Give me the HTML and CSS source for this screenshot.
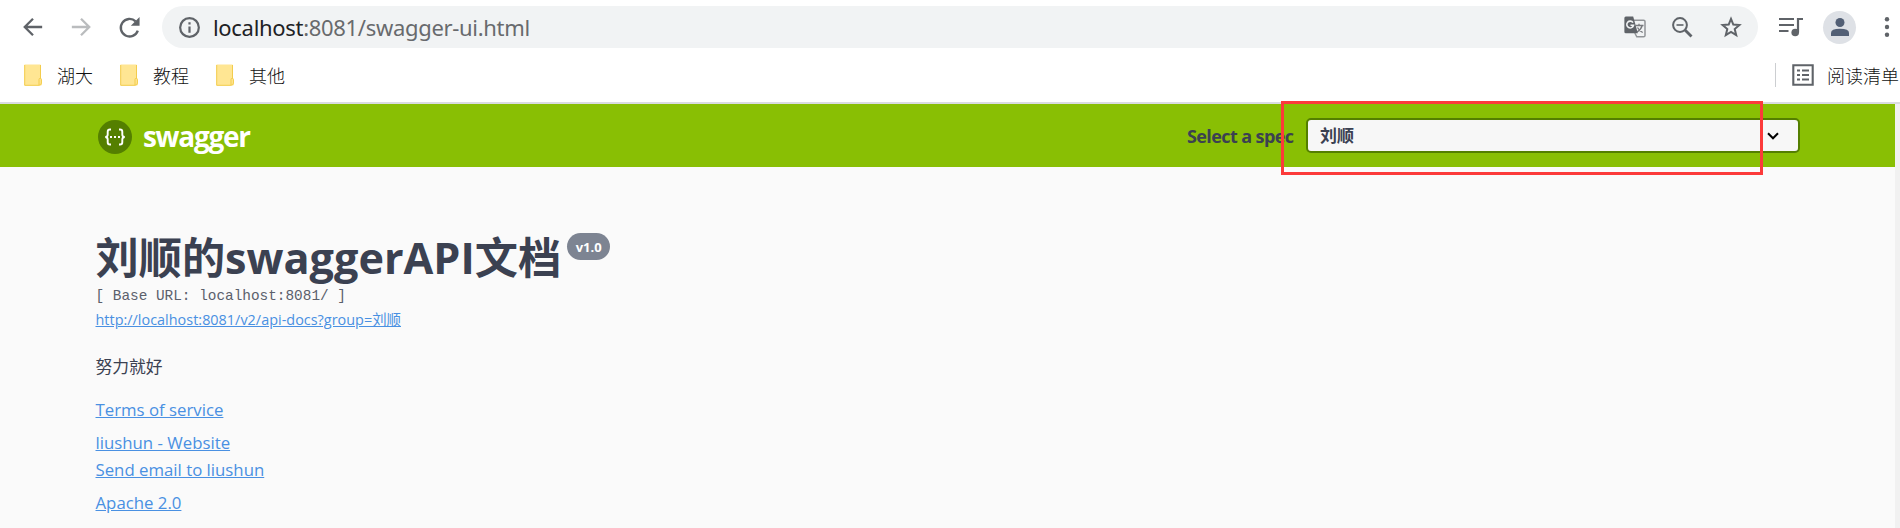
FILE: index.html
```html
<!DOCTYPE html>
<html lang="zh-CN">
<head>
<meta charset="utf-8">
<title>Swagger UI</title>
<link rel="stylesheet" href="styles.css">
</head>
<body>
<header class="browser">
  <div class="toolbar">
    <svg class="nav back" viewBox="0 0 24 24"><path d="M22 12H3M12 3L3 12l9 9"/></svg>
    <svg class="nav forward" viewBox="0 0 24 24"><path d="M2 12h19M12 3l9 9-9 9"/></svg>
    <svg class="nav reload" viewBox="0 0 24 24"><path d="M21.500 15.500A10 10 0 1 1 19 5"/><path class="solid" d="M23.500 0v10h-10z"/></svg>
    <div class="address">
      <svg class="info" viewBox="0 0 20 20"><circle cx="10" cy="10" r="8.9"/><path d="M10 9v6M10 5v2.2"/></svg>
      <span class="url"><b class="host">localhost</b>:8081/swagger-ui.html</span>
      <svg class="translate" viewBox="0 0 22 22"><path class="page" d="M10 4.2h9.6q1.4 0 1.4 1.4v13.8q0 1.4-1.4 1.4h-6.8l-2-3.8"/><path class="glyph" d="M11.5 9.5h8M15 7.7v1.8M18.2 9.5q-1 4-5.2 6.500M13.500 11.500q1.500 3 5.200 5"/><path class="cover" d="M1.800.5h7.400l4.600 16.800h-12Q.4 17.300.4 15.900V2Q.4.5 1.800.5z"/><path class="g" d="M9 6.600A3.400 3.400 0 1 0 9.500 9.300H6.500"/></svg>
      <svg class="magnify" viewBox="0 0 21 21"><circle cx="8" cy="8" r="6.900"/><path class="handle" d="M13 13l6.500 6.500"/><path class="minus" d="M4.500 8h7"/></svg>
      <svg class="star" viewBox="0 0 24 24"><path d="M12 3.800l2.300 5.700 6.100.5-4.700 4 1.500 6-5.200-3.200-5.200 3.200 1.500-6-4.700-4 6.100-.5z"/></svg>
    </div>
    <svg class="media" viewBox="0 0 25 20"><path d="M0 2h15M0 8h15M0 14h9.500"/><path d="M19 15.500V2h5"/><circle cx="16.200" cy="15.500" r="3.800"/></svg>
    <div class="avatar"><svg viewBox="0 0 18 18"><circle cx="9" cy="4.500" r="4.500"/><path d="M0 18v-3q0-4.200 9-4.200T18 15v3z"/></svg></div>
    <svg class="more" viewBox="0 0 6 20"><circle cx="3" cy="2.300" r="2.200"/><circle cx="3" cy="10" r="2.200"/><circle cx="3" cy="17.700" r="2.200"/></svg>
  </div>
  <nav class="bookmarks">
    <div class="bookmark"><svg class="folder" viewBox="0 0 18 22"><path d="M.5.5h15.500q1 0 1 1V14.500q1 .5 1 1.500v4q0 1.500-1.500 1.500H.5z"/><path class="fold" d="M16.500 1v13.500M.700 1v20.300h14.300M15 21V15.500q0-1.200 1.200-1.200t1.200 1.200v3.500q0 2-2.400 2.300"/></svg><span>湖大</span></div>
    <div class="bookmark"><svg class="folder" viewBox="0 0 18 22"><path d="M.5.5h15.500q1 0 1 1V14.500q1 .5 1 1.500v4q0 1.500-1.500 1.500H.5z"/><path class="fold" d="M16.500 1v13.500M.700 1v20.300h14.300M15 21V15.500q0-1.200 1.200-1.200t1.200 1.200v3.500q0 2-2.400 2.300"/></svg><span>教程</span></div>
    <div class="bookmark"><svg class="folder" viewBox="0 0 18 22"><path d="M.5.5h15.500q1 0 1 1V14.500q1 .5 1 1.500v4q0 1.500-1.500 1.500H.5z"/><path class="fold" d="M16.500 1v13.500M.700 1v20.300h14.300M15 21V15.500q0-1.200 1.200-1.200t1.200 1.200v3.500q0 2-2.400 2.300"/></svg><span>其他</span></div>
    <div class="reading">
      <svg viewBox="0 0 22 22"><path d="M1.300 1.300h19.400v19.400H1.300zM5 6.500h3M10 6.500h7M5 11h3M10 11h7M5 15.500h3M10 15.500h7"/></svg>
      <span>阅读清单</span>
    </div>
  </nav>
</header>
<div class="viewport">
  <main class="page-body">
    <div class="topbar">
      <svg class="logo" viewBox="0 0 34 34"><circle cx="17" cy="17" r="17"/><path d="M13 9.500h-1q-2.300 0-2.300 2.300v2.700q0 2.500-2.500 2.500 2.500 0 2.500 2.500v2.700q0 2.300 2.300 2.300h1M21 9.500h1q2.300 0 2.300 2.300v2.700q0 2.500 2.500 2.500-2.500 0-2.500 2.500v2.700q0 2.300-2.300 2.300h-1"/><path class="dots" d="M12 17h2M16 17h2M20 17h2"/></svg>
      <span class="brand">swagger</span>
      <span class="spec-label">Select a spec</span>
      <div class="spec-select"><span>刘顺</span><svg viewBox="0 0 12 8"><path d="M1 1.300l5 5 5-5"/></svg></div>
      <div class="marker"></div>
    </div>
    <section class="info-block">
      <div class="heading"><h1 class="title">刘顺的swaggerAPI文档</h1><span class="version">v1.0</span></div>
      <pre class="base-url">[ Base URL: localhost:8081/ ]</pre>
      <a class="docs-link">http://localhost:8081/v2/api-docs?group=刘顺</a>
      <p class="description">努力就好</p>
      <div class="links">
        <a class="terms">Terms of service</a>
        <a>liushun - Website</a>
        <a>Send email to liushun</a>
        <a class="license">Apache 2.0</a>
      </div>
    </section>
  </main>
  <div class="scrollbar"></div>
</div>
</body>
</html>
```
FILE: styles.css
```css
* { box-sizing: border-box; }
body { margin: 0; width: 1900px; height: 528px; overflow: hidden; background: #fff; font-family: "Open Sans", "Noto Sans CJK SC", sans-serif; }
svg { display: block; flex: none; fill: none; }

.browser { height: 104px; border-bottom: 2px solid #dadce0; }
.toolbar { display: flex; align-items: center; height: 54px; padding-left: 22px; }
.nav { width: 22px; height: 22px; stroke: #5f6368; stroke-width: 2.500; }
.forward { margin-left: 26px; stroke: #babcbe; }
.reload { margin-left: 27px; width: 21px; height: 21px; margin-right: 2px; overflow: visible; stroke-width: 2.700; }
.reload .solid { fill: #5f6368; stroke: none; }
.address { display: flex; align-items: center; width: 1596px; height: 42px; margin-left: 20px; padding-left: 17px; border-radius: 21px; background: #f1f3f4; }
.info { width: 21px; height: 21px; stroke: #5f6368; stroke-width: 2.100; }
.url { width: 1411px; margin-left: 13px; padding-bottom: 1px; font: 22px/40px "Noto Sans", sans-serif; letter-spacing: -.31px; color: #686a6d; white-space: nowrap; }
.host { font-weight: 400; color: #202124; }
.translate { width: 22px; height: 22px; }
.translate .page { stroke: #919497; stroke-width: 1.500; }
.translate .glyph { stroke: #77797d; stroke-width: 1.300; }
.translate .cover { fill: #5f6368; }
.translate .g { stroke: #f1f3f4; stroke-width: 1.600; }
.magnify { width: 21px; height: 21px; margin-left: 26px; stroke: #5f6368; stroke-width: 2; }
.magnify .handle { stroke-width: 2.800; }
.magnify .minus { stroke-width: 1.600; }
.star { width: 24px; height: 24px; margin-left: 26px; stroke: #5f6368; stroke-width: 2; }
.media { width: 25px; height: 20px; margin-left: 21px; stroke: #5f6368; stroke-width: 2.200; }
.media circle { fill: #5f6368; stroke: none; }
.avatar { display: grid; place-items: center; flex: none; width: 33px; height: 33px; margin-left: 19px; border-radius: 50%; background: #dee1e6; }
.avatar svg { width: 18px; height: 18px; fill: #525f75; }
.more { width: 6px; height: 20px; margin-left: 28px; fill: #5f6368; }

.bookmarks { display: flex; align-items: center; height: 42px; padding-left: 24px; font: 300 18px/26px "Noto Sans CJK SC", sans-serif; color: #111; }
.bookmark { display: flex; align-items: center; width: 96px; gap: 15px; }
.folder { width: 18px; height: 22px; fill: #ffe693; }
.folder .fold { fill: none; stroke: #f3cc4d; }
.reading { display: flex; align-items: center; height: 24px; margin-left: 1463px; padding-left: 16px; border-left: 1px solid #ccced1; gap: 13px; white-space: nowrap; }
.reading svg { width: 22px; height: 22px; stroke: #5f6368; stroke-width: 2.100; }

.viewport { display: flex; height: 424px; }
.page-body { width: 1895px; background: #fafafa; color: #3b4151; }
.scrollbar { width: 5px; background: #f1f1f1; }
.topbar { position: relative; display: flex; align-items: center; height: 63px; padding-left: 98px; background: #89bf04; }
.logo { width: 34px; height: 34px; margin-top: 3px; fill: #547f00; }
.logo path { fill: none; stroke: #fff; stroke-width: 1.900; }
.logo .dots { stroke-width: 2; }
.brand { width: 1043px; margin-left: 11px; padding-top: 1px; font: 700 28px/40px "Open Sans", sans-serif; letter-spacing: -1.300px; color: #fff; }
.spec-label { width: 120px; padding-left: 1px; font: 700 18px/30px "Open Sans", sans-serif; letter-spacing: -.6px; white-space: nowrap; }
.spec-select { display: flex; align-items: center; justify-content: space-between; width: 494px; height: 35px; padding: 0 19px 2px 12px; border: 2px solid #547f00; border-radius: 5px; background: #f7f7f7; font: 700 17px/28px "Noto Sans CJK SC", sans-serif; }
.spec-select svg { width: 12px; height: 8px; margin-top: 3px; stroke: #000; stroke-width: 2; }
.marker { position: absolute; left: 1281px; top: -3px; width: 482px; height: 74px; border: 3px solid #fc3a3a; }

.info-block { padding: 60px 0 0 95.500px; }
.heading { display: flex; align-items: flex-start; height: 59px; }
.title { margin: 0; padding-top: 2px; font-size: 43.200px; line-height: 58px; font-weight: 700; white-space: nowrap; }
.version { width: 43px; height: 27px; margin: 6px 0 0 6px; border-radius: 14px; background: #7d8492; color: #fff; text-align: center; font-size: 13px; line-height: 28px; font-weight: 700; }
.base-url { margin: 0; font: 14.400px/21px "Liberation Mono", monospace; color: #5b606c; }
.docs-link { display: block; width: max-content; margin-top: 1px; font-size: 14.400px; line-height: 24px; letter-spacing: .02px; }
.description { margin: 21px 0 0; font-size: 16.800px; line-height: 28px; }
.links { display: flex; flex-direction: column; align-items: flex-start; margin-top: 15px; font-size: 16.800px; line-height: 27px; }
.terms { margin-bottom: 6px; }
.license { margin-top: 6px; }
.info-block a { color: #4990e2; text-decoration: underline; }
```
